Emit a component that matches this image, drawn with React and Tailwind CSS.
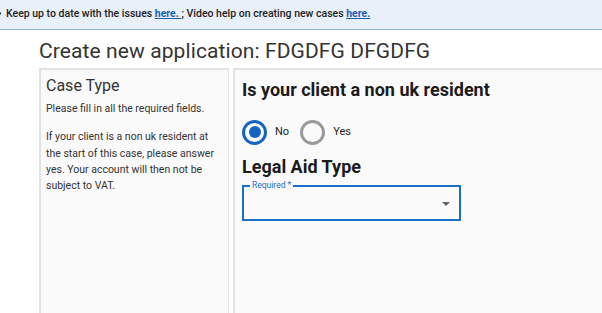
export default function App() {
  return (
    <div className="w-[602px] h-[313px] overflow-hidden bg-white" style={{ fontFamily: "Roboto, 'Liberation Sans', sans-serif" }}>
      <div className="h-[30px] bg-[#e8f0f9] border-b border-[#8fb4e0] flex items-center relative">
        <span className="absolute left-[-2px] top-[12px] w-[3px] h-[3px] rounded-full bg-[#1f3550]" />
        <p className="pl-[6px] pb-[2px] text-[10.5px] font-medium text-[#222]">
          Keep up to date with the issues <a className="text-[#1a5fb4] underline font-bold">here. </a>; Video help on creating new cases <a className="text-[#1a5fb4] underline font-bold">here.</a>
        </p>
      </div>
      <div className="pl-[39px]">
        <h1 className="text-[21px] text-[#333] leading-none pt-[11px] h-[38px] tracking-[0.1px]">Create new application: FDGDFG DFGDFG</h1>
        <div className="flex gap-[4px] h-[250px]">
          <div className="w-[190px] bg-[#fafafa] border-2 border-r border-[#e2e2e2] px-[5px] pt-[6px] text-[#333]">
            <div className="text-[16px] leading-[20px]">Case Type</div>
            <p className="text-[10.5px] leading-[16.3px] mt-[5px]">Please fill in all the required fields.</p>
            <p className="text-[10.5px] leading-[16.3px] mt-[12px] pr-[2px]">If your client is a non uk resident at the start of this case, please answer yes. Your account will then not be subject to VAT.</p>
          </div>
          <div className="flex-1 bg-[#fafafa] border-2 border-r-0 border-[#e2e2e2] pl-[7px] pt-[9px]">
            <h2 className="text-[18px] font-bold text-[#1b1b1b] leading-[22px]">Is your client a non uk resident</h2>
            <div className="flex items-center mt-[17px] h-[28px]">
              <span className="w-[25px] h-[25px] rounded-full border-[3px] border-[#1565c0] flex items-center justify-center">
                <span className="w-[12px] h-[12px] rounded-full bg-[#1565c0]" />
              </span>
              <span className="text-[11px] text-[#222] ml-[8px]">No</span>
              <span className="w-[25px] h-[25px] rounded-full border-[3px] border-[#9a9a9a] ml-[11px]" />
              <span className="text-[11px] text-[#222] ml-[8px]">Yes</span>
            </div>
            <h2 className="text-[18px] font-bold text-[#1b1b1b] leading-[22px] mt-[10px]">Legal Aid Type</h2>
            <div className="relative w-[219px] h-[36px] border-2 border-[#1a6fc9] mt-[7px]">
              <span className="absolute left-[6px] top-[-7px] px-[2px] bg-[#fafafa] text-[8.5px] text-[#1a6fc9] leading-[10px]">Required *</span>
              <span className="absolute right-[9px] top-[15px] w-0 h-0 border-l-[4px] border-r-[4px] border-t-[4px] border-l-transparent border-r-transparent border-t-[#666]" />
            </div>
          </div>
        </div>
      </div>
    </div>
  );
}
